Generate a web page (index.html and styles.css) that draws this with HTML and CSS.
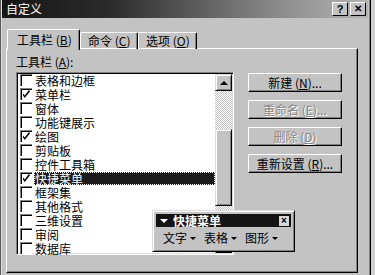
FILE: index.html
```html
<!DOCTYPE html>
<html lang="zh-CN">
<head>
  <meta charset="UTF-8" />
  <title>自定义</title>
  <link rel="stylesheet" href="styles.css">
</head>
<body>
  <div class="dialog">
    <div class="titlebar">
      <span class="title">自定义</span>
      <div class="title-btns">
        <span class="tbtn">?</span>
        <span class="tbtn close">✕</span>
      </div>
    </div>

    <div class="tabs">
      <div class="tab active">工具栏 (<u>B</u>)</div>
      <div class="tab">命令 (<u>C</u>)</div>
      <div class="tab">选项 (<u>O</u>)</div>
    </div>

    <div class="panel">
      <div class="label">工具栏 (<u>A</u>):</div>
      <div class="panel-body">
        <div class="listbox">
          <div class="rows">
            <div class="row"><span class="cb"></span><span class="txt">表格和边框</span></div>
            <div class="row"><span class="cb on"></span><span class="txt">菜单栏</span></div>
            <div class="row"><span class="cb"></span><span class="txt">窗体</span></div>
            <div class="row"><span class="cb"></span><span class="txt">功能键展示</span></div>
            <div class="row"><span class="cb on"></span><span class="txt">绘图</span></div>
            <div class="row"><span class="cb"></span><span class="txt">剪贴板</span></div>
            <div class="row"><span class="cb"></span><span class="txt">控件工具箱</span></div>
            <div class="row selected"><span class="cb on"></span><span class="txt">快捷菜单</span></div>
            <div class="row"><span class="cb"></span><span class="txt">框架集</span></div>
            <div class="row"><span class="cb"></span><span class="txt">其他格式</span></div>
            <div class="row"><span class="cb"></span><span class="txt">三维设置</span></div>
            <div class="row"><span class="cb"></span><span class="txt">审阅</span></div>
            <div class="row"><span class="cb"></span><span class="txt">数据库</span></div>
          </div>
          <div class="scrollbar">
            <div class="sbtn"><span class="arrow up"></span></div>
            <div class="track t1"></div>
            <div class="thumb"></div>
            <div class="track t2"></div>
            <div class="sbtn"><span class="arrow down"></span></div>
          </div>
        </div>

        <div class="buttons">
          <button class="btn">新建 (<u>N</u>)...</button>
          <button class="btn disabled">重命名 (<u>E</u>)...</button>
          <button class="btn disabled">删除 (<u>D</u>)</button>
          <button class="btn">重新设置 (<u>R</u>)...</button>
        </div>
      </div>
    </div>

    <div class="floatbar">
      <div class="fb-title">
        <span class="fb-name"><i class="tri"></i>快捷菜单</span>
        <span class="fb-close">×</span>
      </div>
      <div class="fb-menu">
        <span class="fb-item">文字 <i class="dd"></i></span>
        <span class="fb-item">表格 <i class="dd"></i></span>
        <span class="fb-item">图形 <i class="dd"></i></span>
      </div>
    </div>
  </div>
</body>
</html>
```

FILE: styles.css
```css
body {
  margin: 0;
  width: 375px;
  height: 275px;
  overflow: hidden;
  background: #d0d0d0;
  font-family: "Noto Sans CJK SC", "Liberation Sans", sans-serif;
  font-size: 12px;
  color: #000;
}

.dialog {
  position: relative;
  box-sizing: border-box;
  width: 371px;
  height: 275px;
  padding: 0 3px;
  background: #c3c3c3;
  border-right: 1px solid #000;
  box-shadow: inset -1px 0 #808080, inset 1px 0 #5a5a5a, inset 2px 0 #dcdcdc;
}

.titlebar {
  height: 18px;
  display: flex;
  align-items: center;
  justify-content: space-between;
  margin: 0 -1px 0 -1px;
  padding-left: 4px;
  background: linear-gradient(to right, #151515, #2c2c2c 30%, #8a8a8a 75%, #b4b4b4);
  color: #fff;
  line-height: 18px;
}

.title {
  font-size: 12px;
}

.title-btns {
  display: flex;
  gap: 2px;
  margin-right: 2px;
}

.tbtn {
  box-sizing: border-box;
  width: 16px;
  height: 14px;
  background: #c3c3c3;
  color: #000;
  font-family: "Liberation Sans", sans-serif;
  font-weight: bold;
  font-size: 11px;
  line-height: 12px;
  text-align: center;
  border: 1px solid;
  border-color: #fff #000 #000 #fff;
}

.tbtn.close {
  font-size: 10px;
}

.tabs {
  display: flex;
  align-items: flex-end;
  height: 30px;
  padding-left: 4px;
}

.tab {
  box-sizing: border-box;
  height: 17px;
  padding: 0 0 0 7px;
  line-height: 15px;
  white-space: nowrap;
  border: 1px solid #fff;
  border-bottom: none;
  border-right: 1px solid #000;
  box-shadow: inset -1px 0 #808080;
  border-radius: 2px 2px 0 0;
  margin-bottom: -1px;
}

.tab.active {
  position: relative;
  z-index: 2;
  height: 21px;
  width: 73px;
  padding: 2px 0 0 9px;
  background: #c3c3c3;
  margin-bottom: -2px;
}

.tab:nth-child(2) {
  width: 58px;
}

.tab:nth-child(3) {
  width: 59px;
}

.panel {
  box-sizing: border-box;
  width: 352px;
  height: 225px;
  margin-left: 3px;
  border: 1px solid;
  border-color: #fff #000 #000 #fff;
  box-shadow: inset -1px -1px #808080;
  padding: 6px 0 0 9px;
}

.label {
  height: 14px;
  line-height: 14px;
  margin-bottom: 3px;
}

.panel-body {
  display: grid;
  grid-template-columns: 218px 94px;
  gap: 14px;
}

.listbox {
  box-sizing: border-box;
  height: 183px;
  display: flex;
  background: #fff;
  border: 1px solid;
  border-color: #808080 #fff #fff #808080;
  box-shadow: inset 1px 1px #000, inset -1px -1px #dcdcdc;
  padding: 1px;
}

.rows {
  flex: 1;
  margin-top: -1px;
}

.row {
  display: flex;
  align-items: center;
  height: 14px;
}

.cb {
  box-sizing: border-box;
  width: 12px;
  height: 12px;
  margin: 0 2px 0 2px;
  border-top: 1px solid #808080;
  border-left: 1px solid #808080;
  box-shadow: inset 1px 1px #000;
  background: #fff;
  position: relative;
}

.cb.on::after {
  content: "";
  position: absolute;
  left: 2px;
  top: 1px;
  width: 7px;
  height: 8px;
  clip-path: polygon(0 45%, 25% 70%, 85% 0, 100% 15%, 25% 100%, 0 70%);
  background-color: #000;
}

.txt {
  flex: 1;
  height: 13px;
  line-height: 13px;
  padding-left: 1px;
}

.row.selected .txt {
  background: #1a1a1a;
  color: #fff;
  outline: 1px dotted #fff;
  outline-offset: -1px;
}

.scrollbar {
  width: 17px;
  display: flex;
  flex-direction: column;
}

.sbtn {
  box-sizing: border-box;
  height: 17px;
  display: flex;
  align-items: center;
  justify-content: center;
  background: #c3c3c3;
  border: 1px solid;
  border-color: #dcdcdc #000 #000 #dcdcdc;
  box-shadow: inset 1px 1px #fff, inset -1px -1px #808080;
}

.arrow {
  width: 0;
  height: 0;
  border-left: 4px solid transparent;
  border-right: 4px solid transparent;
}

.arrow.up {
  border-bottom: 4px solid #000;
}

.arrow.down {
  border-top: 4px solid #000;
}

.track {
  background: repeating-conic-gradient(#fff 0 25%, #c3c3c3 0 50%) 0 0 / 2px 2px;
}

.t1 {
  height: 38px;
}

.t2 {
  flex: 1;
}

.thumb {
  box-sizing: border-box;
  height: 77px;
  background: #c3c3c3;
  border: 1px solid;
  border-color: #dcdcdc #000 #000 #dcdcdc;
  box-shadow: inset 1px 1px #fff, inset -1px -1px #808080;
}

.buttons {
  display: flex;
  flex-direction: column;
  gap: 8px;
  padding-top: 1px;
}

.btn {
  box-sizing: border-box;
  height: 19px;
  padding: 0;
  font: inherit;
  line-height: 15px;
  white-space: nowrap;
  background: #c3c3c3;
  border: 1px solid;
  border-color: #fff #000 #000 #fff;
  box-shadow: inset -1px -1px #808080;
  color: #000;
}

.btn.disabled {
  color: #878787;
  text-shadow: 1px 1px #fff;
}

.floatbar {
  position: absolute;
  left: 152px;
  top: 210px;
  box-sizing: border-box;
  width: 143px;
  height: 42px;
  padding: 3px;
  background: #c3c3c3;
  border: 1px solid;
  border-color: #dcdcdc #000 #000 #dcdcdc;
  box-shadow: inset 1px 1px #fff, inset -1px -1px #808080;
}

.fb-title {
  display: flex;
  align-items: center;
  justify-content: space-between;
  height: 13px;
  padding: 0 2px 0 4px;
  background: #141414;
  color: #fff;
  font-weight: bold;
  line-height: 13px;
}

.fb-name {
  display: flex;
  align-items: center;
  gap: 5px;
  font-size: 12px;
}

.tri {
  width: 0;
  height: 0;
  border-left: 4px solid transparent;
  border-right: 4px solid transparent;
  border-top: 4px solid #fff;
}

.fb-close {
  box-sizing: border-box;
  width: 10px;
  height: 10px;
  background: #d8d8d8;
  color: #000;
  font-family: "Liberation Sans", sans-serif;
  font-size: 10px;
  line-height: 9px;
  text-align: center;
}

.fb-menu {
  display: flex;
  gap: 8px;
  padding: 3px 0 0 7px;
  height: 16px;
  line-height: 16px;
}

.fb-item {
  display: flex;
  align-items: center;
  gap: 3px;
}

.dd {
  width: 0;
  height: 0;
  border-left: 3px solid transparent;
  border-right: 3px solid transparent;
  border-top: 3px solid #000;
}
```
